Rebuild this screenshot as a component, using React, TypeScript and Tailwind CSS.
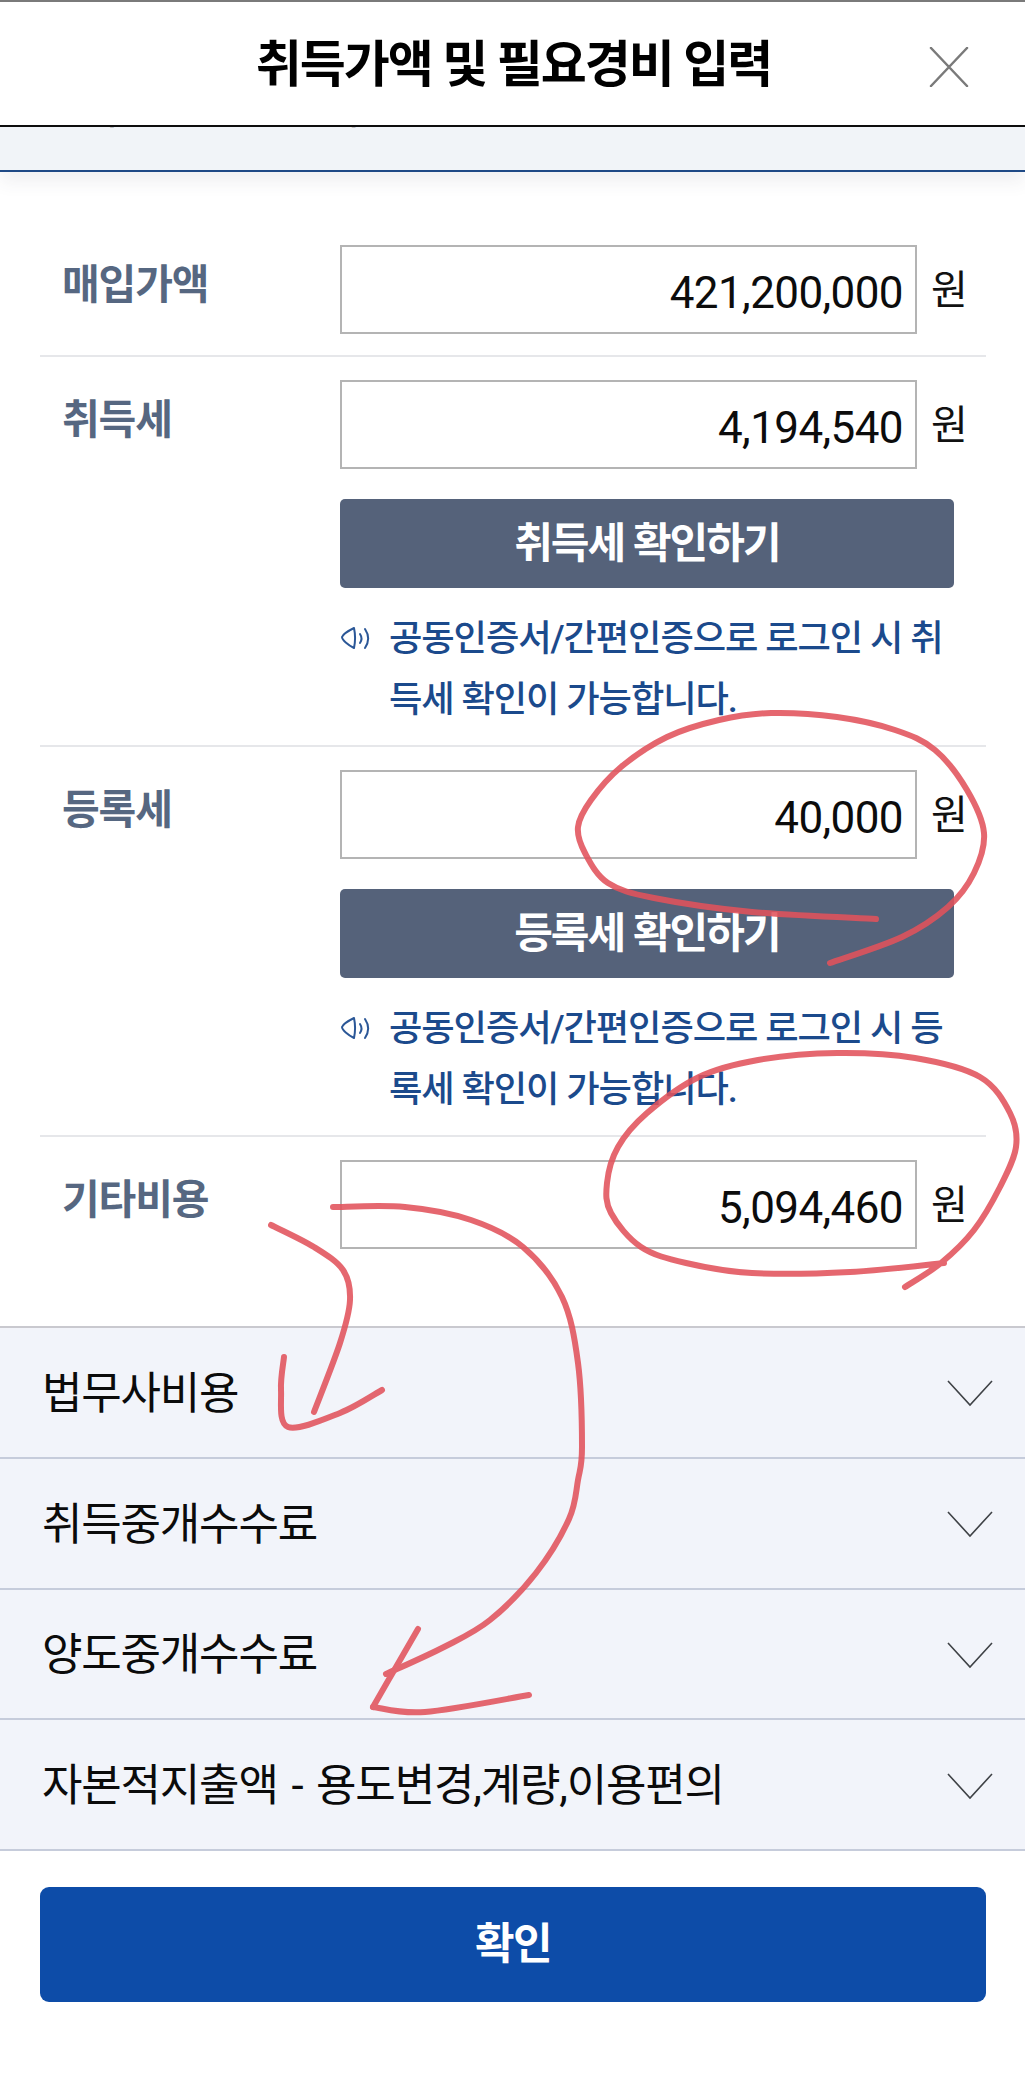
import React from "react";

type P = [number, number];

function smooth(pts: P[]) {
  let d = `M${pts[0][0]} ${pts[0][1]}`;
  for (let i = 0; i < pts.length - 1; i++) {
    const p0 = pts[Math.max(i - 1, 0)];
    const p1 = pts[i];
    const p2 = pts[i + 1];
    const p3 = pts[Math.min(i + 2, pts.length - 1)];
    const c1x = p1[0] + (p2[0] - p0[0]) / 6;
    const c1y = p1[1] + (p2[1] - p0[1]) / 6;
    const c2x = p2[0] - (p3[0] - p1[0]) / 6;
    const c2y = p2[1] - (p3[1] - p1[1]) / 6;
    d += ` C${c1x} ${c1y} ${c2x} ${c2y} ${p2[0]} ${p2[1]}`;
  }
  return d;
}

const strokes: P[][] = [
  [[876, 919], [752, 912], [654, 898], [608, 883], [585, 853], [578, 827], [591, 800], [621, 767], [667, 737], [719, 720], [771, 713], [837, 717], [895, 730], [935, 750], [967, 790], [984, 833], [974, 873], [948, 907], [902, 937], [830, 963]],
  [[944, 1263], [850, 1272], [752, 1273], [686, 1263], [641, 1247], [611, 1213], [607, 1183], [618, 1147], [647, 1113], [699, 1077], [758, 1060], [837, 1053], [915, 1058], [980, 1077], [1010, 1113], [1016, 1147], [1000, 1187], [974, 1230], [941, 1263], [905, 1287]],
  [[271, 1225], [314, 1247], [343, 1270], [350, 1300], [340, 1343], [314, 1412]],
  [[284, 1357], [281, 1390], [288, 1427], [340, 1413], [382, 1390]],
  [[333, 1207], [405, 1207], [471, 1220], [523, 1247], [562, 1297], [578, 1363], [582, 1447], [578, 1480], [569, 1519], [536, 1573], [490, 1620], [444, 1647], [386, 1674]],
  [[418, 1629], [392, 1674], [373, 1707]],
  [[373, 1707], [425, 1712], [529, 1695]],
];

function Speaker() {
  return (
    <svg width="32" height="24" viewBox="0 0 32 24" fill="none" stroke="#2b5797" strokeWidth="2" strokeLinecap="round" strokeLinejoin="round" className="absolute left-0 top-[18px]">
      <path d="M14 2 C8 5 3 8 2 11 C2 14 8 19 14 22 C15.500 15 15.500 9 14 2 Z" />
      <path d="M20 8 C22 11 22 14 20 17" />
      <path d="M25 3 C29 9 29 16 25 22" />
    </svg>
  );
}

function Chevron() {
  return (
    <svg width="46" height="27" viewBox="0 0 46 27" fill="none" stroke="#3f4246" strokeWidth="1.600" className="shrink-0">
      <path d="M1 1 L23 25 L45 1" />
    </svg>
  );
}

function Row({ label, value, btn, note, border = true }: { label: string; value: string; btn?: string; note?: string; border?: boolean }) {
  return (
    <div className={`flex pt-[23px] ${border ? "border-b-2 border-[#e6e7ea]" : ""} ${note ? "pb-[15px]" : "pb-[21px]"}`}>
      <div className="w-[300px] shrink-0 pl-[22px] text-[41px] font-semibold leading-[81px] tracking-[-1.100px] text-[#566781]">{label}</div>
      <div className="w-[614px] shrink-0">
        <div className="flex items-center">
          <div className="flex h-[89px] w-[577px] shrink-0 items-center justify-end border-2 border-[#b4b4b4] bg-white pr-[12px] pt-[6px] text-[44px] leading-none tracking-[-0.600px] text-[#0c0c0c]">{value}</div>
          <span className="ml-[14px] shrink-0 pt-[2px] text-[40px] leading-none text-[#111]">원</span>
        </div>
        {btn && (
          <div className="mt-[30px] flex h-[89px] items-center justify-center rounded-[5px] bg-[#55627a] text-[42px] font-semibold tracking-[-1.900px] text-white">{btn}</div>
        )}
        {note && (
          <div className="relative mt-[20px] pl-[49px] text-[36.300px] font-medium leading-[61px] tracking-[-1.100px] break-all text-[#1b4a8c]">
            <Speaker />
            {note}
          </div>
        )}
      </div>
    </div>
  );
}

function Accordion({ title }: { title: string }) {
  return (
    <div className="flex h-[130.750px] items-center justify-between border-b-2 border-[#c6ccdb] bg-[#f2f4fa] pl-[42px] pr-[32px] pt-[3px]">
      <span className="text-[44px] leading-none tracking-[-1.200px] [word-spacing:4px] text-[#0b0b0b]">{title}</span>
      <Chevron />
    </div>
  );
}

function Scribbles() {
  return (
    <svg className="pointer-events-none absolute left-0 top-0" width="1025" height="2088" viewBox="0 0 1025 2088" fill="none" stroke="#e2535c" strokeWidth="6" strokeLinecap="round" strokeLinejoin="round" opacity="0.88">
      {strokes.map((pts, i) => (
        <path key={i} d={smooth(pts)} />
      ))}
    </svg>
  );
}

export default function App() {
  return (
    <div className="relative h-[2088px] w-[1025px] overflow-hidden bg-white font-['Roboto','Noto_Sans_CJK_KR',sans-serif]">
      <header className="relative z-10 flex h-[127px] items-center justify-center border-t-2 border-b-2 border-t-[#7a7a7a] border-b-[#0d0d0d] bg-white pl-[2px] pt-[2px]">
        <h1 className="text-[50px] font-bold leading-none tracking-[-2px] text-black">취득가액 및 필요경비 입력</h1>
        <svg width="40" height="40" viewBox="0 0 40 40" fill="none" stroke="#7a7a7a" strokeWidth="2.500" strokeLinecap="round" className="absolute right-[56px] top-[45px]">
          <path d="M2 1 L38 39 M38 1 L2 39" />
        </svg>
      </header>
      <div className="h-[45px] overflow-hidden border-b-2 border-[#1f4a86] bg-[#f1f4f8] pl-[54px] shadow-[0_10px_18px_rgba(60,70,90,0.08)]">
        <div className="mt-[-35px] text-[36px] font-medium leading-[40px] tracking-[-1px] text-[#333]">취득가액 및 필요경비</div>
      </div>
      <main>
        <div className="pl-[40px] pr-[39px] pt-[50px]">
          <Row label="매입가액" value="421,200,000" />
          <Row label="취득세" value="4,194,540" btn="취득세 확인하기" note="공동인증서/간편인증으로 로그인 시 취득세 확인이 가능합니다." />
          <Row label="등록세" value="40,000" btn="등록세 확인하기" note="공동인증서/간편인증으로 로그인 시 등록세 확인이 가능합니다." />
          <Row label="기타비용" value="5,094,460" border={false} />
        </div>
        <div className="mt-[56px] border-t-2 border-[#c9c9cf]">
          <Accordion title="법무사비용" />
          <Accordion title="취득중개수수료" />
          <Accordion title="양도중개수수료" />
          <Accordion title="자본적지출액 - 용도변경,계량,이용편의" />
        </div>
        <div className="pl-[40px] pr-[39px] pt-[36px]">
          <div className="flex h-[115px] items-center justify-center rounded-[9px] bg-[#0d4ca8] text-[43px] font-semibold tracking-[-1.500px] text-white">확인</div>
        </div>
      </main>
      <Scribbles />
    </div>
  );
}
